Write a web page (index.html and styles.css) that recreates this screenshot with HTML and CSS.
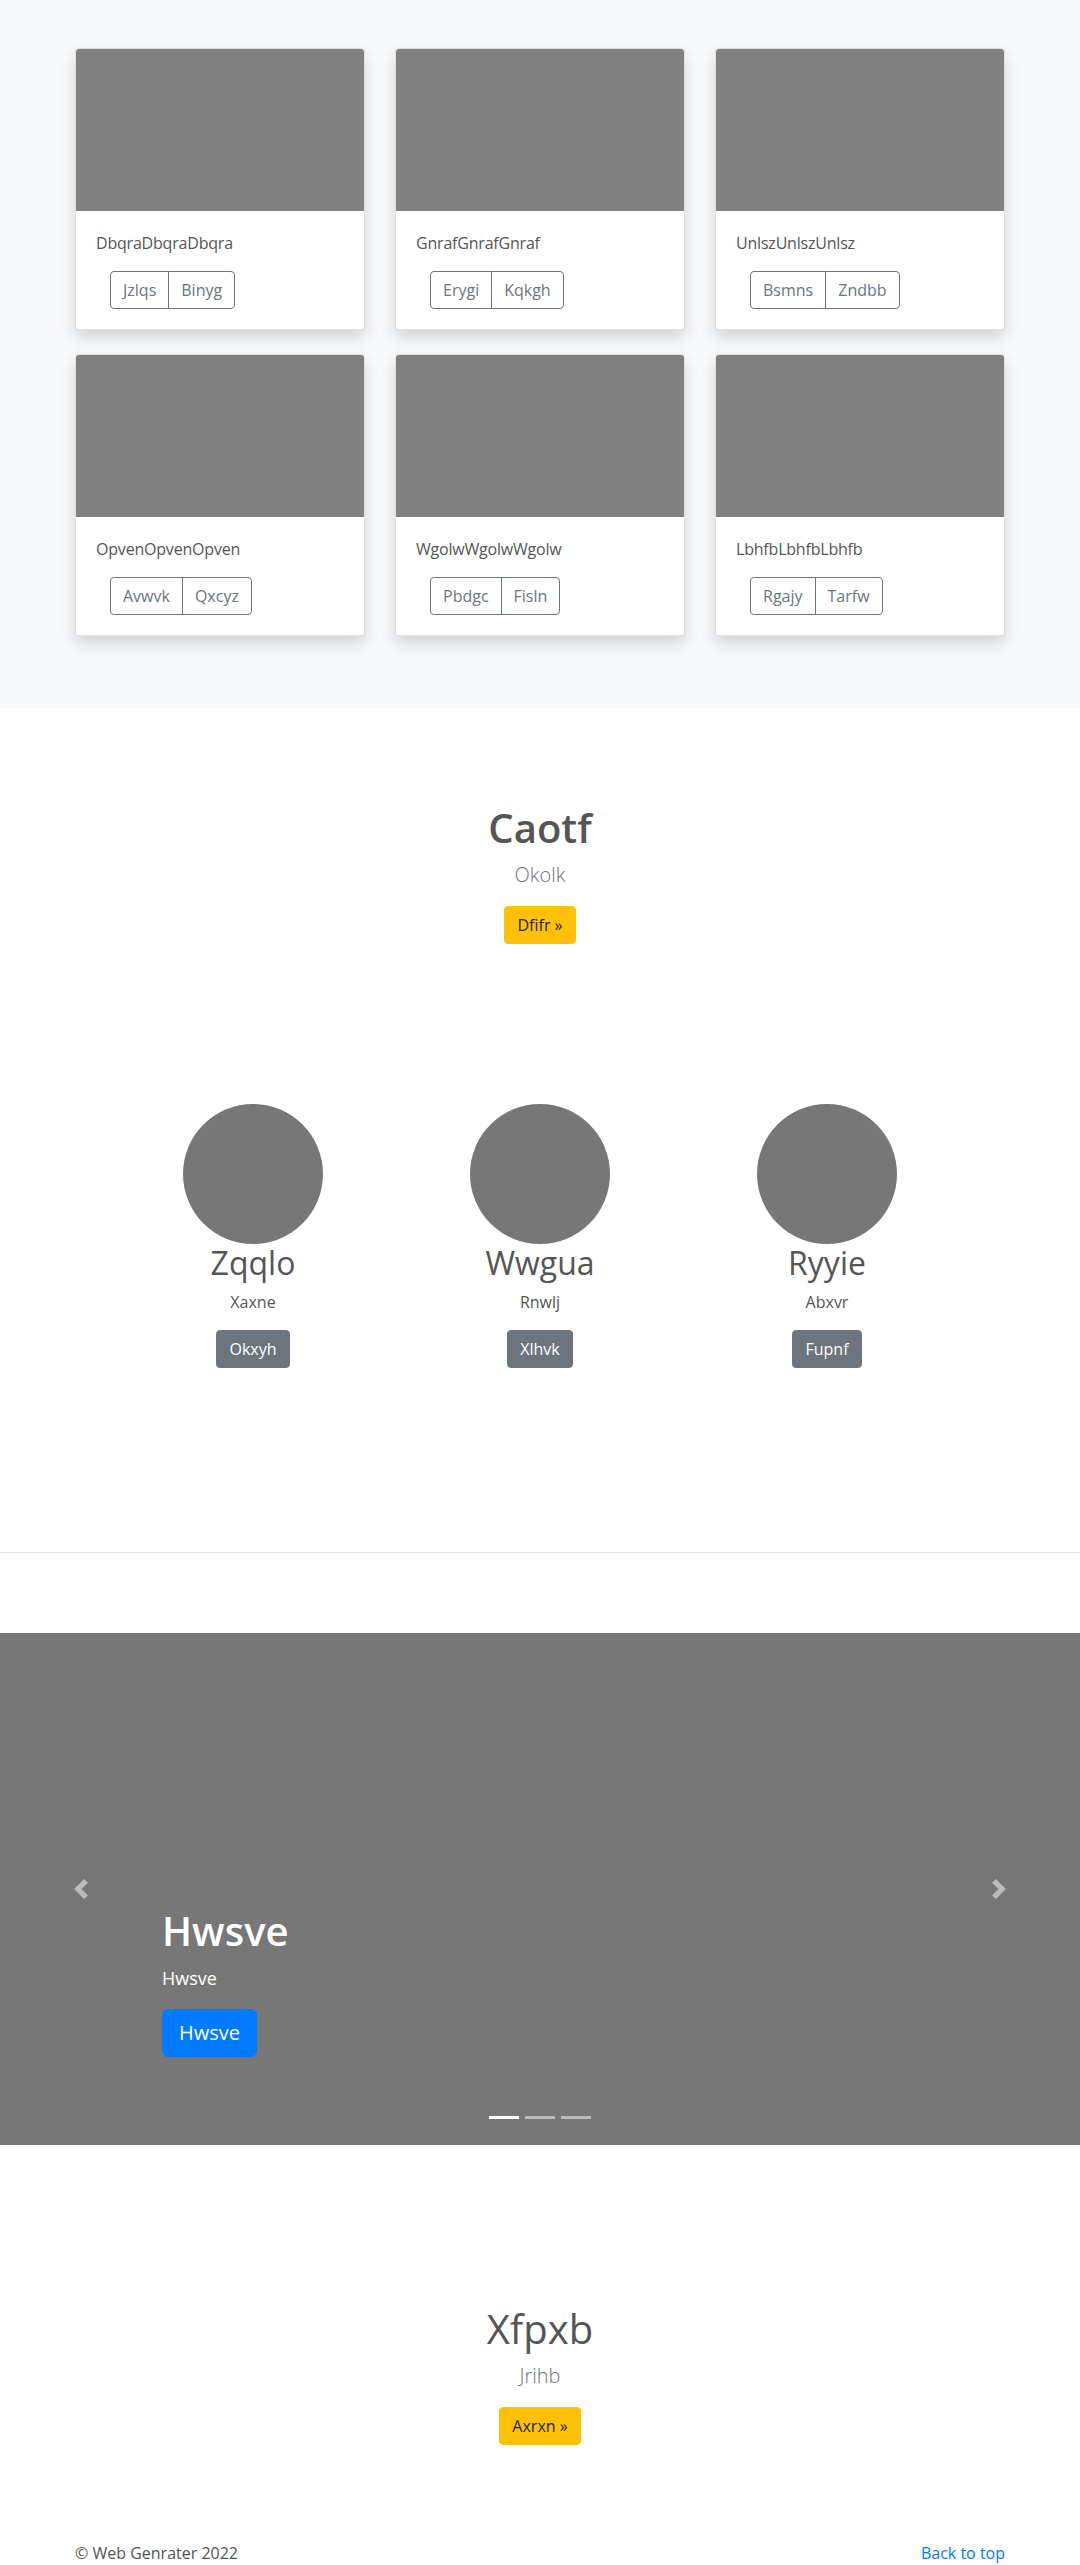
FILE: index.html
```html
<!DOCTYPE html>
<html lang="en">
<head>
<meta charset="utf-8">
<title>Album</title>
<link rel="stylesheet" href="styles.css">
</head>
<body>
<main>
  <section class="album">
    <div class="container">
      <div class="card-grid">
        <div class="card">
          <div class="card-img"></div>
          <div class="card-body">
            <p class="card-text">DbqraDbqraDbqra</p>
            <div class="btn-group"><a class="btn-outline">Jzlqs</a><a class="btn-outline">Binyg</a></div>
          </div>
        </div>
        <div class="card">
          <div class="card-img"></div>
          <div class="card-body">
            <p class="card-text">GnrafGnrafGnraf</p>
            <div class="btn-group"><a class="btn-outline">Erygi</a><a class="btn-outline">Kqkgh</a></div>
          </div>
        </div>
        <div class="card">
          <div class="card-img"></div>
          <div class="card-body">
            <p class="card-text">UnlszUnlszUnlsz</p>
            <div class="btn-group"><a class="btn-outline">Bsmns</a><a class="btn-outline">Zndbb</a></div>
          </div>
        </div>
        <div class="card">
          <div class="card-img"></div>
          <div class="card-body">
            <p class="card-text">OpvenOpvenOpven</p>
            <div class="btn-group"><a class="btn-outline">Avwvk</a><a class="btn-outline">Qxcyz</a></div>
          </div>
        </div>
        <div class="card">
          <div class="card-img"></div>
          <div class="card-body">
            <p class="card-text">WgolwWgolwWgolw</p>
            <div class="btn-group"><a class="btn-outline">Pbdgc</a><a class="btn-outline">Fisln</a></div>
          </div>
        </div>
        <div class="card">
          <div class="card-img"></div>
          <div class="card-body">
            <p class="card-text">LbhfbLbhfbLbhfb</p>
            <div class="btn-group"><a class="btn-outline">Rgajy</a><a class="btn-outline">Tarfw</a></div>
          </div>
        </div>
      </div>
    </div>
  </section>

  <section class="hero">
    <h1 class="hero-title bold">Caotf</h1>
    <p class="lead">Okolk</p>
    <p class="hero-actions"><a class="btn btn-warning">Dfifr »</a></p>
  </section>

  <section class="marketing">
    <div class="marketing-row">
      <div class="feature">
        <div class="circle"></div>
        <h2 class="feature-title">Zqqlo</h2>
        <p class="feature-text">Xaxne</p>
        <p class="feature-action"><a class="btn btn-secondary">Okxyh</a></p>
      </div>
      <div class="feature">
        <div class="circle"></div>
        <h2 class="feature-title">Wwgua</h2>
        <p class="feature-text">Rnwlj</p>
        <p class="feature-action"><a class="btn btn-secondary">Xlhvk</a></p>
      </div>
      <div class="feature">
        <div class="circle"></div>
        <h2 class="feature-title">Ryyie</h2>
        <p class="feature-text">Abxvr</p>
        <p class="feature-action"><a class="btn btn-secondary">Fupnf</a></p>
      </div>
    </div>
  </section>

  <hr class="divider">

  <div class="carousel">
    <a class="carousel-control prev" aria-label="Previous">
      <svg width="20" height="20" viewBox="0 0 8 8"><path fill="#fff" d="M5.25 0l-4 4 4 4 1.5-1.5L4.25 4l2.5-2.5L5.25 0z"/></svg>
    </a>
    <div class="carousel-caption">
      <h1 class="caption-title">Hwsve</h1>
      <p class="caption-text">Hwsve</p>
      <p class="caption-action"><a class="btn btn-lg btn-primary">Hwsve</a></p>
    </div>
    <a class="carousel-control next" aria-label="Next">
      <svg width="20" height="20" viewBox="0 0 8 8"><path fill="#fff" d="M2.75 0l-1.5 1.5L3.75 4l-2.5 2.5L2.75 8l4-4-4-4z"/></svg>
    </a>
    <ol class="indicators">
      <li class="active"></li>
      <li></li>
      <li></li>
    </ol>
  </div>

  <section class="hero hero-second">
    <h1 class="hero-title">Xfpxb</h1>
    <p class="lead">Jrihb</p>
    <p class="hero-actions"><a class="btn btn-warning">Axrxn »</a></p>
  </section>
</main>

<footer class="footer">
  <p>© Web Genrater 2022</p>
  <p><a class="back-top" href="#">Back to top</a></p>
</footer>
</body>
</html>
```

FILE: styles.css
```css
* { box-sizing: border-box; }

body {
  margin: 0;
  font-family: "Segoe UI", "Open Sans", "Noto Sans", sans-serif;
  font-size: 16px;
  line-height: 1.5;
  color: #555;
  background: #fff;
}

p { margin: 0 0 16px; }
h1, h2 { margin: 0 0 8px; }

.container {
  width: 960px;
  margin: 0 auto;
  padding: 0 15px;
}

/* Album */
.album {
  background: #f8f9fa;
  padding: 48px 0 48px;
}
.card-grid {
  display: grid;
  grid-template-columns: repeat(3, 290px);
  column-gap: 30px;
  row-gap: 24px;
  padding-bottom: 24px;
}
.card {
  background: #fff;
  border: 1px solid rgba(0,0,0,.125);
  border-radius: 4px;
  box-shadow: 0 8px 16px rgba(0,0,0,.15);
  overflow: hidden;
}
.card-img {
  height: 162px;
  background: #808080;
}
.card-body {
  padding: 20px;
}
.card-text {
  line-height: 24px;
  margin-bottom: 16px;
  letter-spacing: -0.2px;
}
.btn-group {
  display: inline-flex;
  margin-left: 14px;
}
.btn-outline {
  display: inline-block;
  padding: 6px 12px;
  line-height: 24px;
  border: 1px solid #6c757d;
  color: #6c757d;
  font-size: 16px;
}
.btn-outline:first-child {
  border-radius: 4px 0 0 4px;
}
.btn-outline:last-child {
  border-radius: 0 4px 4px 0;
  margin-left: -1px;
}

/* Buttons */
.btn {
  display: inline-block;
  padding: 6px 12px;
  font-size: 16px;
  line-height: 24px;
  border: 1px solid transparent;
  border-radius: 4px;
  text-decoration: none;
}
.btn-warning { background: #ffc107; border-color: #ffc107; color: #212529; }
.btn-secondary { background: #6c757d; border-color: #6c757d; color: #fff; }
.btn-primary { background: #007bff; border-color: #007bff; color: #fff; }
.btn-lg {
  padding: 8px 16px;
  font-size: 20px;
  line-height: 30px;
  border-radius: 6px;
}

/* Hero */
.hero {
  text-align: center;
  padding: 96px 0 80px;
}
.hero-title {
  font-size: 40px;
  line-height: 48px;
  font-weight: 400;
  color: #555;
}
.hero-title.bold { font-weight: 600; }
.lead {
  font-size: 20px;
  line-height: 30px;
  font-weight: 300;
  color: #6c757d;
}

/* Marketing */
.marketing {
  padding: 64px 0 160px;
}
.marketing-row {
  display: grid;
  grid-template-columns: repeat(3, 287px);
  justify-content: center;
}
.feature {
  text-align: center;
  margin-bottom: 24px;
}
.circle {
  width: 140px;
  height: 140px;
  border-radius: 50%;
  background: #777;
  margin: 0 auto;
}
.feature-title {
  font-size: 32px;
  line-height: 38px;
  font-weight: 400;
  color: #555;
}
.feature-action { margin-bottom: 0; }

.divider {
  margin: 0 0 80px;
  border: 0;
  border-top: 1px solid rgba(0,0,0,.1);
  height: 0;
}

/* Carousel */
.carousel {
  position: relative;
  height: 512px;
  background: #777;
  margin-bottom: 64px;
}
.carousel-caption {
  position: absolute;
  left: 15%;
  right: 15%;
  bottom: 52px;
  padding: 20px 0;
  color: #fff;
  text-align: left;
}
.caption-title {
  font-size: 40px;
  line-height: 48px;
  font-weight: 600;
  color: #fff;
}
.caption-text {
  font-size: 18px;
  line-height: 30px;
}
.caption-action { margin-bottom: 16px; }
.carousel-control {
  position: absolute;
  top: 0;
  bottom: 0;
  width: 15%;
  display: flex;
  align-items: center;
  justify-content: center;
  opacity: .5;
}
.carousel-control.prev { left: 0; }
.carousel-control.next { right: 0; }
.indicators {
  position: absolute;
  left: 0;
  right: 0;
  bottom: 0;
  margin: 0 0 16px;
  padding: 0;
  list-style: none;
  display: flex;
  justify-content: center;
}
.indicators li {
  width: 30px;
  height: 23px;
  margin: 0 3px;
  border-top: 10px solid transparent;
  border-bottom: 10px solid transparent;
  background: #fff;
  background-clip: padding-box;
  opacity: .5;
}
.indicators li.active { opacity: 1; }

.hero-second {
  padding: 96px 0 64px;
}

/* Footer */
.footer {
  width: 960px;
  margin: 0 auto;
  padding: 16px 15px 32px;
  display: flex;
  justify-content: space-between;
}
.footer p { margin: 0 0 16px; }
.back-top {
  color: #007bff;
  text-decoration: none;
}
```
